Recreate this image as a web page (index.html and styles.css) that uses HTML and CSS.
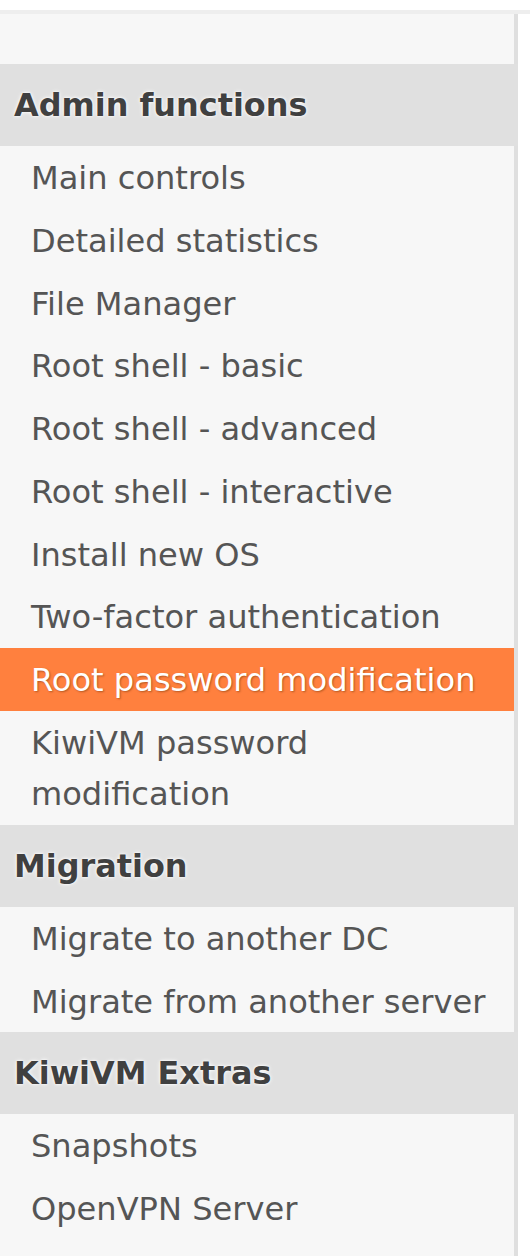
FILE: index.html
```html
<!DOCTYPE html>
<html lang="en">
<head>
    <meta charset="UTF-8">
    <meta name="viewport" content="width=device-width, initial-scale=1.0">
    <title>KiwiVM Control Panel</title>
    <link rel="stylesheet" href="styles.css">
</head>
<body>

<div class="topbar"></div>

<!-- Sidebar menu -->
<div class="sidebar">
    <div class="menu-head">Admin functions</div>
    <a class="menu-item" href="#">Main controls</a>
    <a class="menu-item" href="#">Detailed statistics</a>
    <a class="menu-item" href="#">File Manager</a>
    <a class="menu-item" href="#">Root shell - basic</a>
    <a class="menu-item" href="#">Root shell - advanced</a>
    <a class="menu-item" href="#">Root shell - interactive</a>
    <a class="menu-item" href="#">Install new OS</a>
    <a class="menu-item" href="#">Two-factor authentication</a>
    <a class="menu-item active" href="#">Root password modification</a>
    <a class="menu-item" href="#">KiwiVM password modification</a>

    <div class="menu-head">Migration</div>
    <a class="menu-item" href="#">Migrate to another DC</a>
    <a class="menu-item" href="#">Migrate from another server</a>

    <div class="menu-head">KiwiVM Extras</div>
    <a class="menu-item" href="#">Snapshots</a>
    <a class="menu-item" href="#">OpenVPN Server</a>
</div>

</body>
</html>
```

FILE: styles.css
```css
body {
    font-family: 'DejaVu Sans', Verdana, sans-serif;
    background-color: #fff;
    margin: 0;
    padding: 10px 0 0 0;
    overflow: hidden;
}
.topbar {
    height: 4px;
    background-color: #eee;
}
.sidebar {
    width: 514px;
    padding-top: 50px;
    background-color: #f7f7f7;
    border-right: 4px solid #dfdfdf;
    min-height: 1300px;
}
.menu-head {
    margin-right: -4px;
    padding: 0 14px;
    height: 82px;
    line-height: 82px;
    background-color: #e0e0e0;
    color: #404040;
    font-size: 31.9px;
    font-weight: bold;
    text-shadow: 0 0 4px #fff, 0 0 2px #fff;
}
.menu-item {
    display: block;
    padding: 7px 16px 4.5px 31px;
    line-height: 51.25px;
    font-size: 32.1px;
    color: #555;
    text-decoration: none;
}
.menu-item.active {
    background-color: #ff803e;
    color: #fff;
    text-shadow: 1px 1px 2px rgba(90, 40, 0, 0.45);
}
```
